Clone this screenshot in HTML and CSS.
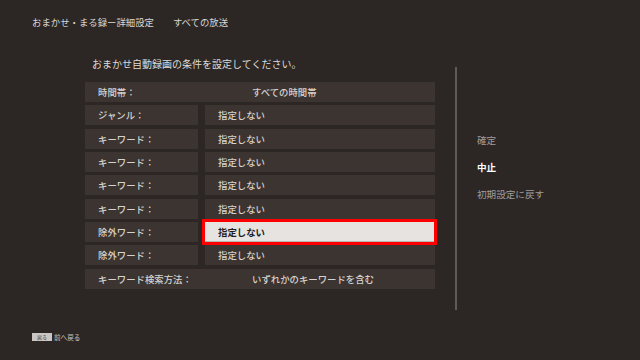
FILE: index.html
```html
<!DOCTYPE html>
<html lang="ja">
<head>
  <meta charset="UTF-8">
  <title>おまかせ・まる録ー詳細設定</title>
  <link rel="stylesheet" href="styles.css">
</head>
<body>
  <div class="screen">
    <div class="header">
      <span class="title">おまかせ・まる録ー詳細設定</span>
      <span class="sub">すべての放送</span>
    </div>

    <div class="main">
      <div class="panel">
        <p class="intro">おまかせ自動録画の条件を設定してください。</p>
        <div class="rows">
          <div class="row wide"><span class="label">時間帯：</span><span class="value">すべての時間帯</span></div>
          <div class="row"><span class="cell label">ジャンル：</span><span class="cell value">指定しない</span></div>
          <div class="row"><span class="cell label">キーワード：</span><span class="cell value">指定しない</span></div>
          <div class="row"><span class="cell label">キーワード：</span><span class="cell value">指定しない</span></div>
          <div class="row"><span class="cell label">キーワード：</span><span class="cell value">指定しない</span></div>
          <div class="row"><span class="cell label">キーワード：</span><span class="cell value">指定しない</span></div>
          <div class="row"><span class="cell label">除外ワード：</span><span class="cell value selected">指定しない</span></div>
          <div class="row"><span class="cell label">除外ワード：</span><span class="cell value">指定しない</span></div>
          <div class="row wide"><span class="label">キーワード検索方法：</span><span class="value">いずれかのキーワードを含む</span></div>
        </div>
      </div>

      <div class="side">
        <ul class="menu">
          <li>確定</li>
          <li class="active">中止</li>
          <li>初期設定に戻す</li>
        </ul>
      </div>
    </div>

    <div class="footer">
      <span class="key">戻る</span>
      <span class="key-text">前へ戻る</span>
    </div>
  </div>
</body>
</html>
```

FILE: styles.css
```css
body {
  margin: 0; padding: 0;
  background: #2c2724; color: #d6d2cf;
  font-family: "Noto Sans CJK JP", "Noto Sans", sans-serif;
}
.screen {
  width: 640px; height: 360px;
  display: flex; flex-direction: column;
  overflow: hidden;
}
.header {
  height: 44px; padding-left: 32px;
  display: flex; align-items: center; gap: 19px;
  font-size: 9.4px; color: #d9d6d3;
}
.main {
  height: 266px;
  display: flex;
}
.panel {
  margin-left: 85px; width: 350px;
  padding-top: 10px;
}
.intro {
  margin: 0 0 8px 7px;
  line-height: 20px; font-size: 10px; color: #dedad7;
}
.rows {
  display: flex; flex-direction: column; gap: 3.33px;
}
.row {
  height: 20px;
  display: flex; gap: 7px;
  font-size: 9.4px; font-weight: 500;
}
.cell {
  background: #3c3430;
  display: flex; align-items: center;
  padding-left: 13px;
}
.cell.label { width: 100px; }
.cell.value { flex: 1; }
.row.wide {
  background: #3c3430;
  align-items: center; gap: 0;
}
.row.wide .label { width: 154px; padding-left: 13px; }
.cell.selected {
  background: #e6e3e1; color: #1e1b1a;
  font-weight: bold;
  outline: 3px solid #f00; outline-offset: 0;
  box-shadow: inset 0 -1px 0 #b9b5b2;
  margin-right: 1px;
}
.side {
  margin-left: 20px; margin-top: 23px;
  border-left: 2px solid #5e5a57;
  flex: 1;
  padding-left: 20px; padding-top: 60px;
}
.menu {
  list-style: none; margin: 0; padding: 0;
  font-size: 9.6px; color: #a19c99;
}
.menu li { line-height: 27px; }
.menu li.active { color: #fff; font-weight: bold; }
.footer {
  flex: 1;
  padding: 23px 0 0 32px;
  display: flex; align-items: flex-start; gap: 2px;
}
.key {
  width: 20px; height: 8px;
  background: #c9c6c4; color: #3a3532;
  font-size: 5px; line-height: 8px; text-align: center;
}
.key-text { font-size: 6.6px; line-height: 8px; color: #c8c4c1; }
```
